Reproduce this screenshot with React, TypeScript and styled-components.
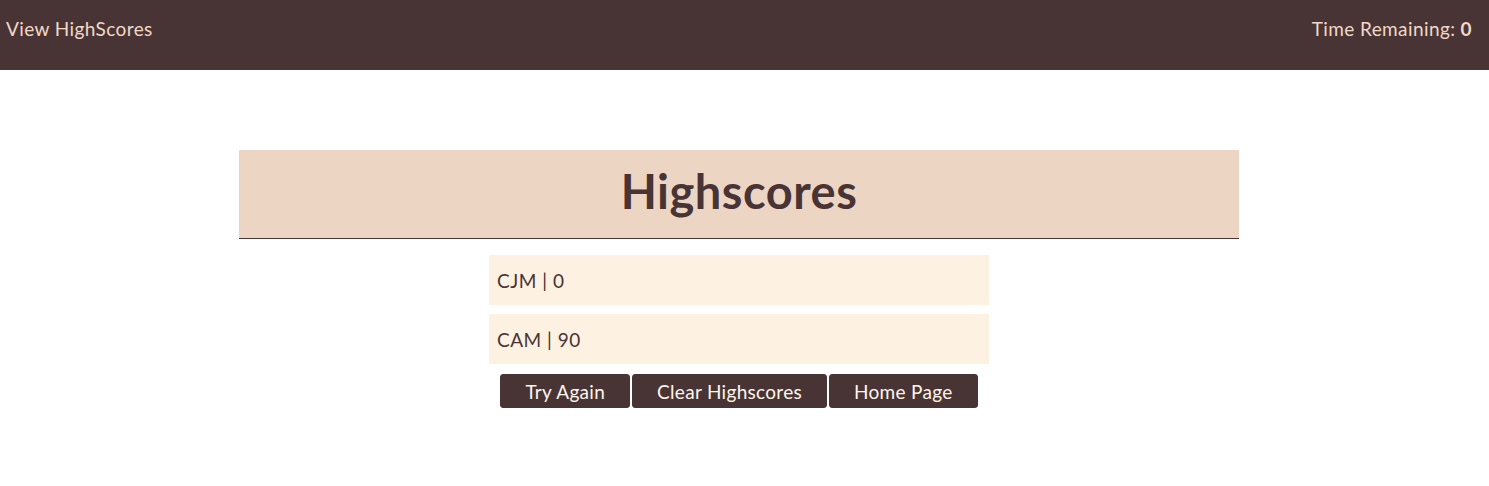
import React from 'react';
import styled, { createGlobalStyle } from 'styled-components';

const GlobalStyle = createGlobalStyle`
    body {
        margin: 0;
        font-family: Lato, "Noto Sans", sans-serif;
        background: #ffffff;
        color: #493435;
    }
`;

const NavBar = styled.header`
    height: 70px;
    background: #493435;
    color: #f2d8c6;
    display: flex;
    justify-content: space-between;
    align-items: flex-start;
    padding: 17px 17px 0 6px;
    box-sizing: border-box;
    font-size: 19px;
    letter-spacing: 0.4px;
`;

const NavLink = styled.span`
    cursor: pointer;
`;

const Timer = styled.span`
    strong {
        font-weight: 700;
    }
`;

const Main = styled.main`
    display: flex;
    flex-direction: column;
    align-items: center;
    padding: 80px 11px 0 0;
`;

const Card = styled.section`
    width: 1000px;
    display: flex;
    flex-direction: column;
    align-items: center;
`;

const Heading = styled.h1`
    width: 100%;
    height: 89px;
    margin: 0 0 16px;
    padding-bottom: 6px;
    background: #edd5c4;
    border-bottom: 1px solid #493435;
    box-sizing: border-box;
    display: flex;
    align-items: center;
    justify-content: center;
    font-size: 47px;
    font-weight: 700;
    letter-spacing: 0.5px;
    color: #493435;
`;

const ScoreList = styled.ol`
    list-style: none;
    margin: 0;
    padding: 0;
    width: 500px;
    display: flex;
    flex-direction: column;
    gap: 9px;
`;

const ScoreRow = styled.li`
    height: 50px;
    background: #fdf1e2;
    display: flex;
    align-items: center;
    padding: 0 8px;
    box-sizing: border-box;
    font-size: 19px;
    letter-spacing: 0.5px;
    color: #493435;
`;

const ButtonRow = styled.div`
    display: flex;
    gap: 2px;
    margin-top: 10px;
`;

const Button = styled.button`
    height: 34px;
    padding: 0 24px;
    background: #493435;
    color: #fff5ea;
    border: 1px solid #493435;
    border-radius: 3px;
    font-family: inherit;
    font-size: 19px;
    letter-spacing: 0.3px;
    cursor: pointer;
`;

const scores = [
    { initials: 'CJM', score: 0 },
    { initials: 'CAM', score: 90 },
];

export default function App() {
    return (
        <>
            <GlobalStyle />
            <NavBar>
                <NavLink>View HighScores</NavLink>
                <Timer>
                    Time Remaining: <strong>0</strong>
                </Timer>
            </NavBar>
            <Main>
                <Card>
                    <Heading>Highscores</Heading>
                    <ScoreList>
                        {scores.map((s) => (
                            <ScoreRow key={s.initials}>
                                {s.initials} | {s.score}
                            </ScoreRow>
                        ))}
                    </ScoreList>
                    <ButtonRow>
                        <Button>Try Again</Button>
                        <Button>Clear Highscores</Button>
                        <Button>Home Page</Button>
                    </ButtonRow>
                </Card>
            </Main>
        </>
    );
}
